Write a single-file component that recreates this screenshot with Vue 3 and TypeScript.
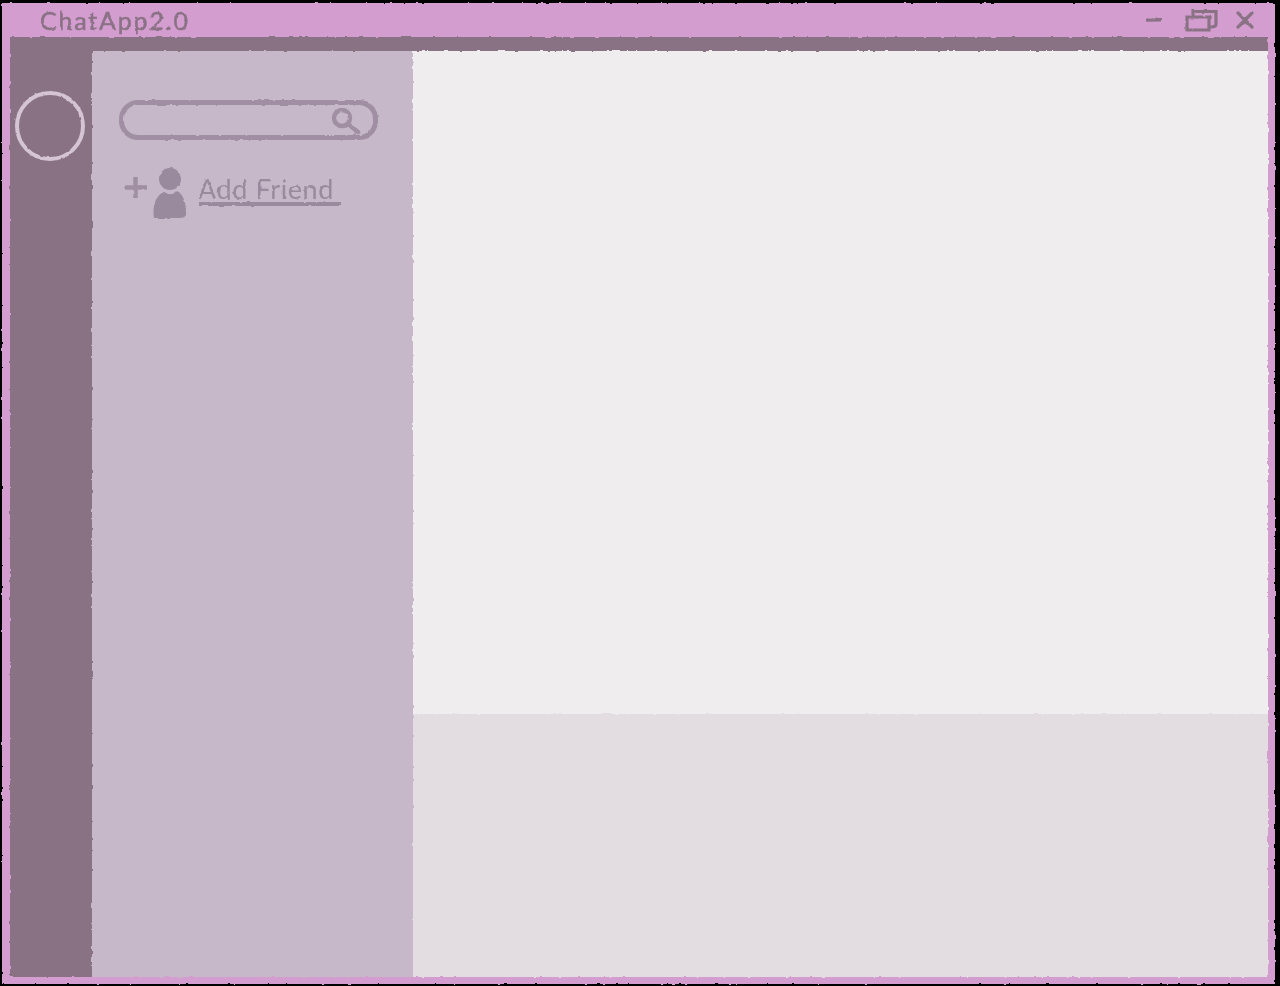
<script setup lang="ts">
const appTitle = 'ChatApp2.0'
const linkLabel = 'Add Friend'
</script>

<template>
  <div class="screen">
    <svg class="filters" width="0" height="0" aria-hidden="true">
      <filter id="rough" x="-1%" y="-1%" width="102%" height="102%" color-interpolation-filters="sRGB">
        <feTurbulence type="fractalNoise" baseFrequency="0.16" numOctaves="2" seed="4" result="noise" />
        <feDisplacementMap in="SourceGraphic" in2="noise" scale="2.6" xChannelSelector="R" yChannelSelector="G" />
        <feGaussianBlur stdDeviation="0.5" />
      </filter>
    </svg>
    <div class="window">
      <header class="titlebar">
        <span class="title">{{ appTitle }}</span>
        <div class="controls">
          <svg class="ctl-min" viewBox="0 0 16 4"><path d="M1 2.2 L15 1.8" /></svg>
          <svg class="ctl-max" viewBox="0 0 33 23">
            <path d="M2 8 H24 V21 H2 Z" />
            <path d="M8 7 V2.5 H31 V15 Q31 18 26 18" />
          </svg>
          <svg class="ctl-close" viewBox="0 0 18 18"><path d="M2 2 L16 16 M16 2 L2 16" /></svg>
        </div>
      </header>
      <div class="shell">
        <aside class="rail">
          <div class="avatar"></div>
        </aside>
        <section class="sidebar">
          <div class="search">
            <svg class="search-icon" viewBox="0 0 30 28">
              <circle cx="11" cy="11" r="8" />
              <path d="M17 17 L27 25" />
            </svg>
          </div>
          <div class="add-friend">
            <svg class="plus" viewBox="0 0 24 24"><path d="M1 12.5 H23 M11.5 2 V23" /></svg>
            <svg class="person" viewBox="0 0 33 50">
              <ellipse cx="17" cy="11" rx="11" ry="11" />
              <path d="M1 50 C-1 38 3 27 11 24 C13 27 22 27 24 23 C30 26 33 34 33 46 C33 49 30 50 26 50 Z" />
            </svg>
            <a class="link">{{ linkLabel }}</a>
          </div>
        </section>
        <main class="main">
          <div class="messages"></div>
          <div class="composer"></div>
        </main>
      </div>
    </div>
  </div>
</template>

<style>
html,
body {
  margin: 0;
  background: #000;
}
</style>

<style scoped>
.screen {
  width: 1280px;
  height: 986px;
  box-sizing: border-box;
  padding: 3px 5px 2px 2px;
  background: #000;
  overflow: hidden;
  font-family: Lato, "Liberation Sans", sans-serif;
}

.filters {
  display: block;
}

.window {
  height: 100%;
  box-sizing: border-box;
  display: flex;
  flex-direction: column;
  padding: 0 7px 7px 8px;
  background: #d49dcf;
  filter: url(#rough);
}

.titlebar {
  height: 34px;
  flex-shrink: 0;
  display: flex;
  align-items: center;
  justify-content: space-between;
  margin: 0 -1px 0 0;
}

.title {
  margin-left: 30px;
  font-size: 25px;
  letter-spacing: 1.8px;
  color: #8a7285;
  -webkit-text-stroke: 0.5px #8a7285;
}

.controls {
  display: flex;
  align-items: center;
  margin-right: 15px;
}

.controls svg {
  display: block;
  fill: none;
  stroke: #8a7285;
  stroke-width: 3.2;
  stroke-linecap: round;
}

.ctl-min {
  width: 16px;
  height: 4px;
  margin-right: 23px;
}

.ctl-max {
  width: 33px;
  height: 23px;
  margin-right: 18px;
}

.ctl-close {
  width: 18px;
  height: 18px;
}

.shell {
  flex: 1;
  min-height: 0;
  display: flex;
  padding-top: 14px;
  background: #8a7285;
}

.rail {
  width: 82px;
  flex-shrink: 0;
}

.avatar {
  width: 70px;
  height: 70px;
  box-sizing: border-box;
  margin: 40px 0 0 5px;
  border: 4.5px solid #d4c4d4;
  border-radius: 50%;
}

.sidebar {
  width: 321px;
  flex-shrink: 0;
  box-sizing: border-box;
  padding: 49px 35px 0 27px;
  background: #c6b8c8;
}

.search {
  height: 40px;
  box-sizing: border-box;
  display: flex;
  align-items: center;
  justify-content: flex-end;
  padding: 2px 12px 0 0;
  border: 5px solid #a08fa3;
  border-radius: 19px;
}

.search-icon {
  width: 30px;
  height: 28px;
  fill: none;
  stroke: #a08fa3;
  stroke-width: 4.5;
  stroke-linecap: round;
}

.add-friend {
  display: flex;
  align-items: flex-start;
  margin: 28px 0 0 5px;
}

.plus {
  width: 24px;
  height: 24px;
  margin: 7px 5px 0 0;
  fill: none;
  stroke: #a08fa3;
  stroke-width: 4.5;
}

.person {
  width: 33px;
  height: 50px;
  fill: #998a9d;
}

.link {
  margin: 8px 0 0 12px;
  padding-right: 7px;
  font-size: 27px;
  line-height: 26px;
  letter-spacing: 0.6px;
  color: #998a9d;
  border-bottom: 4px solid #998a9d;
}

.main {
  flex: 1;
  min-width: 0;
  display: flex;
  flex-direction: column;
}

.messages {
  height: 663px;
  background: #efedee;
}

.composer {
  flex: 1;
  background: #e3dde2;
}
</style>
